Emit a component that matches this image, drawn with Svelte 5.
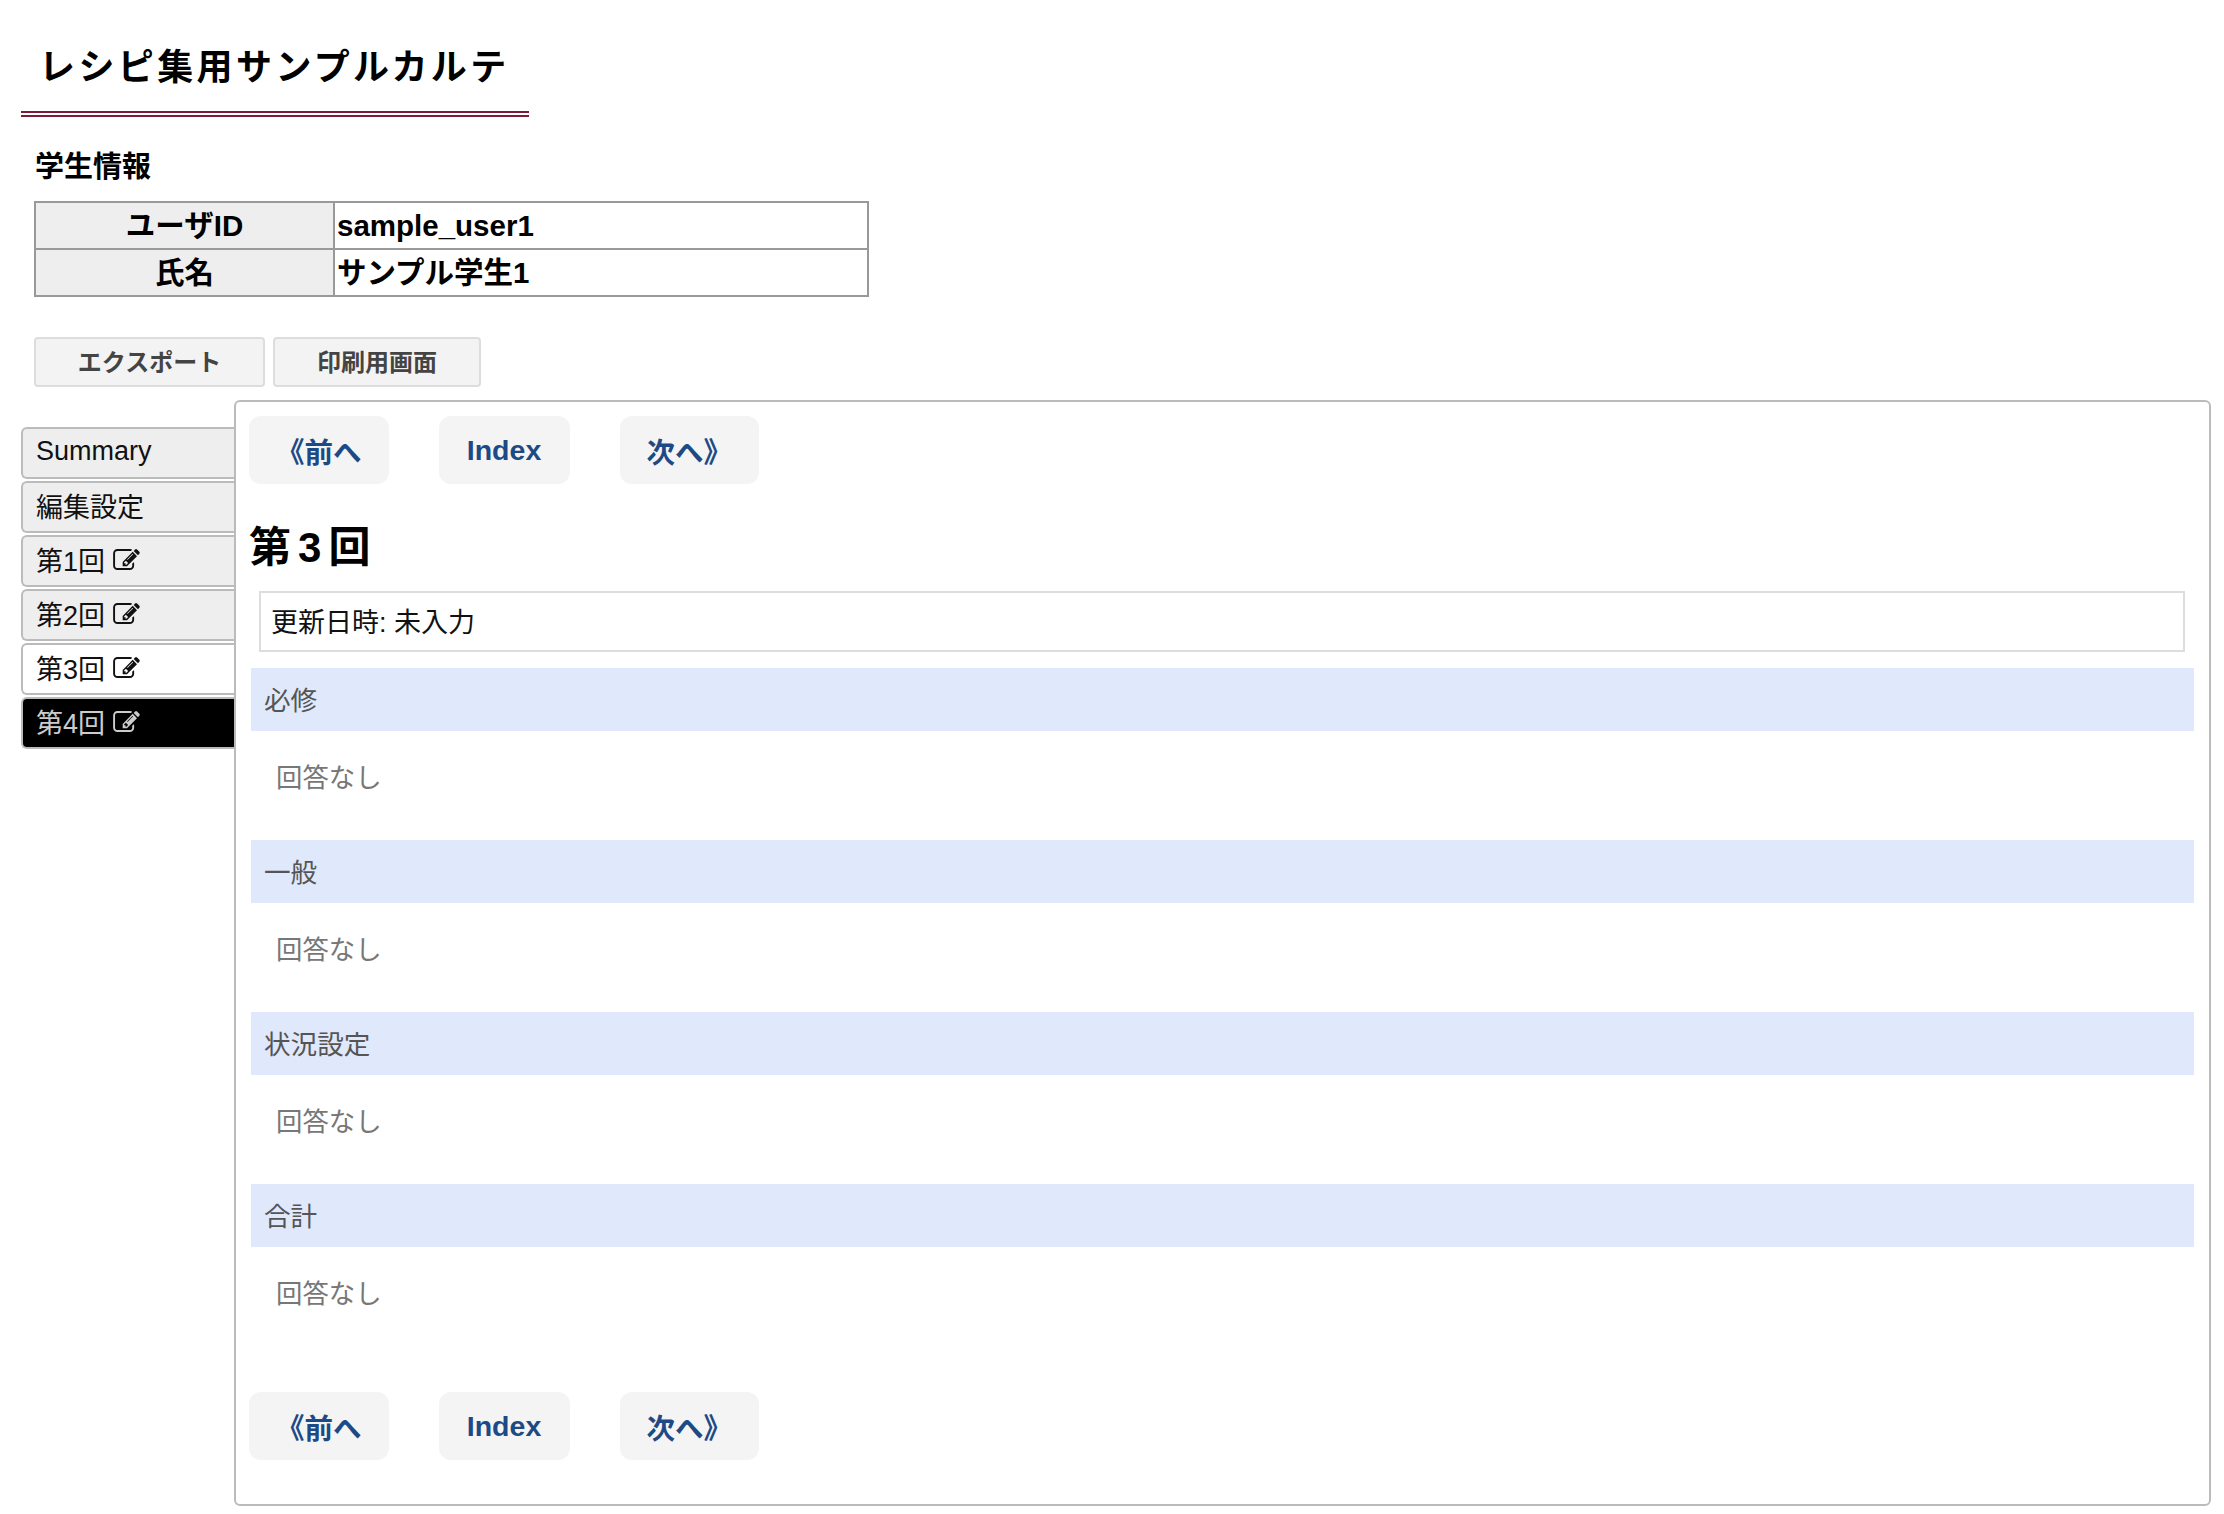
<script>
  const tabs = [
    { label: 'Summary', state: '' },
    { label: '編集設定', state: '' },
    { label: '第1回', state: '', icon: true },
    { label: '第2回', state: '', icon: true },
    { label: '第3回', state: 'active', icon: true },
    { label: '第4回', state: 'dark', icon: true }
  ];
  const sections = ['必修', '一般', '状況設定', '合計'];
  const nav = ['《前へ', 'Index', '次へ》'];
  const editPath = 'M888 1184l116-116-152-152-116 116v56h96v96h56zm440-720q-16-16-33 1l-350 350q-17 17-1 33t33-1l350-350q17-17 1-33zm80 594v190q0 119-84.5 203.5t-203.5 84.5h-832q-119 0-203.5-84.5t-84.5-203.5v-832q0-119 84.5-203.5t203.5-84.5h832q63 0 117 25 15 7 18 23 3 17-9 29l-49 49q-14 14-32 8-23-6-45-6h-832q-66 0-113 47t-47 113v832q0 66 47 113t113 47h832q66 0 113-47t47-113v-126q0-13 9-22l64-64q15-15 35-7t20 29zm-96-738l288 288-672 672h-288v-288zm444 132l-92 92-288-288 92-92q28-28 68-28t68 28l152 152q28 28 28 68t-28 68z';
</script>

<div class="page">
  <h1>レシピ集用サンプルカルテ</h1>
  <h2>学生情報</h2>
  <table>
    <tbody>
      <tr><th>ユーザID</th><td>sample_user1</td></tr>
      <tr><th>氏名</th><td>サンプル学生1</td></tr>
    </tbody>
  </table>
  <div class="actions">
    <button class="export">エクスポート</button>
    <button class="print">印刷用画面</button>
  </div>
  <div class="main">
    <ul class="tabs">
      {#each tabs as tab}
        <li class={tab.state}>
          <span>{tab.label}</span>
          {#if tab.icon}
            <svg viewBox="0 128 1792 1408" aria-hidden="true"><path d={editPath} /></svg>
          {/if}
        </li>
      {/each}
    </ul>
    <section class="panel">
      <nav>
        {#each nav as item}<a href="#top">{item}</a>{/each}
      </nav>
      <h3>第<span class="num">3</span>回</h3>
      <div class="updated">更新日時: 未入力</div>
      {#each sections as s}
        <div class="block">
          <div class="head">{s}</div>
          <p>回答なし</p>
        </div>
      {/each}
      <nav class="bottom">
        {#each nav as item}<a href="#top">{item}</a>{/each}
      </nav>
    </section>
  </div>
</div>

<style>
  :global(body) {
    margin: 0;
    background: #fff;
    color: #000;
    font-family: "Liberation Sans", "Noto Sans CJK JP", sans-serif;
  }
  .page { width: 2224px; height: 1514px; overflow: hidden; box-sizing: border-box; padding-top: 42px; }
  h1 {
    margin: 0 0 0 21px;
    width: 508px;
    height: 75px;
    box-sizing: border-box;
    padding-left: 18px;
    border-bottom: 6px double #7d1a35;
    font-size: 36px;
    line-height: 52px;
    letter-spacing: 3.4px;
    font-weight: 700;
  }
  h2 { margin: 29px 0 0 35px; font-size: 29px; line-height: 42px; font-weight: 700; }
  table { margin: 13px 0 0 34px; width: 835px; border-collapse: collapse; border: 2px solid #999; table-layout: fixed; font-size: 29.5px; font-weight: 700; }
  th, td { border: 2px solid #999; height: 45px; padding: 0 2px; line-height: 34px; }
  th { width: 293px; background: #eee; text-align: center; }
  td { background: #fff; text-align: left; }
  .actions { display: flex; gap: 8px; margin: 40px 0 0 34px; height: 50px; }
  button {
    font: 700 24px "Liberation Sans", "Noto Sans CJK JP", sans-serif;
    color: #444;
    background: #f3f3f3;
    border: 2px solid #ddd;
    border-radius: 4px;
    padding: 0 0 3px;
  }
  .export { width: 231px; }
  .print { width: 208px; }
  .main { display: flex; align-items: flex-start; margin: 13px 0 0 21px; }
  .tabs { list-style: none; margin: 27px 0 0; padding: 0; width: 213px; display: flex; flex-direction: column; gap: 2px; }
  .tabs li {
    height: 52px;
    box-sizing: border-box;
    border: 2px solid #bbb;
    border-right: 0;
    border-radius: 6px 0 0 6px;
    background: #eee;
    padding-left: 13px;
    display: flex;
    align-items: center;
    gap: 8px;
    font-size: 27px;
    color: #111;
  }
  .tabs li span { margin-top: -3px; }
  .tabs li.active { background: #fff; }
  .tabs li.dark { background: #000; color: #ccc; }
  .tabs svg { width: 27px; height: 21px; fill: currentColor; margin-top: -3px; }
  .panel {
    width: 1977px;
    height: 1106px;
    box-sizing: border-box;
    border: 2px solid #bbb;
    border-radius: 6px;
    padding: 14px 13px 0;
    background: #fff;
  }
  nav { display: flex; gap: 50px; }
  nav a {
    height: 68px;
    min-width: 131px;
    padding: 0 27px;
    box-sizing: border-box;
    display: flex;
    align-items: center;
    justify-content: center;
    background: #f4f4f4;
    border-radius: 12px;
    color: #1d4a85;
    font-size: 28.5px;
    font-weight: 700;
    text-decoration: none;
  }
  h3 { margin: 39px 0 0; font-size: 42px; line-height: 50px; font-weight: 700; }
  .num { margin: 0 7px; }
  .updated {
    margin: 18px 11px 0 10px;
    height: 61px;
    box-sizing: border-box;
    border: 2px solid #ddd;
    padding: 0 0 2px 10px;
    display: flex;
    align-items: center;
    font-size: 27px;
    color: #111;
  }
  .block { margin-top: 16px; height: 156px; margin-left: 2px; width: 1943px; }
  .head {
    height: 63px;
    box-sizing: border-box;
    background: #e0e8fc;
    padding: 0 0 2px 13px;
    display: flex;
    align-items: center;
    font-size: 26.6px;
    color: #555;
  }
  .block p { margin: 0; height: 93px; box-sizing: border-box; padding: 0 0 4px 25px; display: flex; align-items: center; font-size: 26.4px; color: #777; }
  nav.bottom { margin-top: 52px; }
</style>
